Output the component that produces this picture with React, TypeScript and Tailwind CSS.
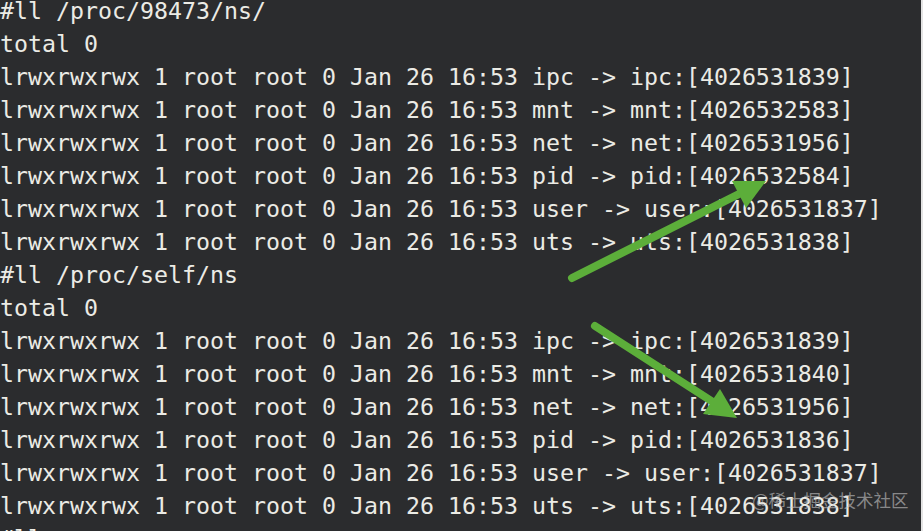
import React from "react";

const lines = [
  "#ll /proc/98473/ns/",
  "total 0",
  "lrwxrwxrwx 1 root root 0 Jan 26 16:53 ipc -> ipc:[4026531839]",
  "lrwxrwxrwx 1 root root 0 Jan 26 16:53 mnt -> mnt:[4026532583]",
  "lrwxrwxrwx 1 root root 0 Jan 26 16:53 net -> net:[4026531956]",
  "lrwxrwxrwx 1 root root 0 Jan 26 16:53 pid -> pid:[4026532584]",
  "lrwxrwxrwx 1 root root 0 Jan 26 16:53 user -> user:[4026531837]",
  "lrwxrwxrwx 1 root root 0 Jan 26 16:53 uts -> uts:[4026531838]",
  "#ll /proc/self/ns",
  "total 0",
  "lrwxrwxrwx 1 root root 0 Jan 26 16:53 ipc -> ipc:[4026531839]",
  "lrwxrwxrwx 1 root root 0 Jan 26 16:53 mnt -> mnt:[4026531840]",
  "lrwxrwxrwx 1 root root 0 Jan 26 16:53 net -> net:[4026531956]",
  "lrwxrwxrwx 1 root root 0 Jan 26 16:53 pid -> pid:[4026531836]",
  "lrwxrwxrwx 1 root root 0 Jan 26 16:53 user -> user:[4026531837]",
  "lrwxrwxrwx 1 root root 0 Jan 26 16:53 uts -> uts:[4026531838]",
  "#ll",
];

export default function App() {
  return (
    <div className="flex h-[531px] w-[923px] overflow-hidden bg-[#2b2c2e]">
      <div className="relative flex-1 overflow-hidden">
        <div
          className="mt-[-6.5px] whitespace-pre text-[23.25px] leading-[33px] text-[#ebebe5]"
          style={{ fontFamily: '"DejaVu Sans Mono", "Liberation Mono", monospace' }}
        >
          {lines.map((l, i) => (
            <div key={i}>{l}</div>
          ))}
        </div>
        <svg
          className="pointer-events-none absolute left-0 top-0"
          width="923"
          height="531"
          viewBox="0 0 923 531"
        >
          <line x1="572" y1="278" x2="741" y2="193" stroke="#5cae3a" strokeWidth="8" strokeLinecap="round" />
          <polygon points="766,181 746,208 732,181" fill="#5cae3a" />
          <line x1="595" y1="326" x2="713" y2="402" stroke="#5cae3a" strokeWidth="8" strokeLinecap="round" />
          <polygon points="737,418 703,414 720,389" fill="#5cae3a" />
        </svg>
        <div
          className="absolute left-[752px] top-[488px] text-[17.5px] leading-[24px] text-[#c8c8c8]/60"
          style={{ fontFamily: '"Noto Sans CJK SC", "Noto Sans", sans-serif' }}
        >
          @稀土掘金技术社区
        </div>
      </div>
      <div className="w-[2px] bg-[#e4e4e4]" />
    </div>
  );
}
